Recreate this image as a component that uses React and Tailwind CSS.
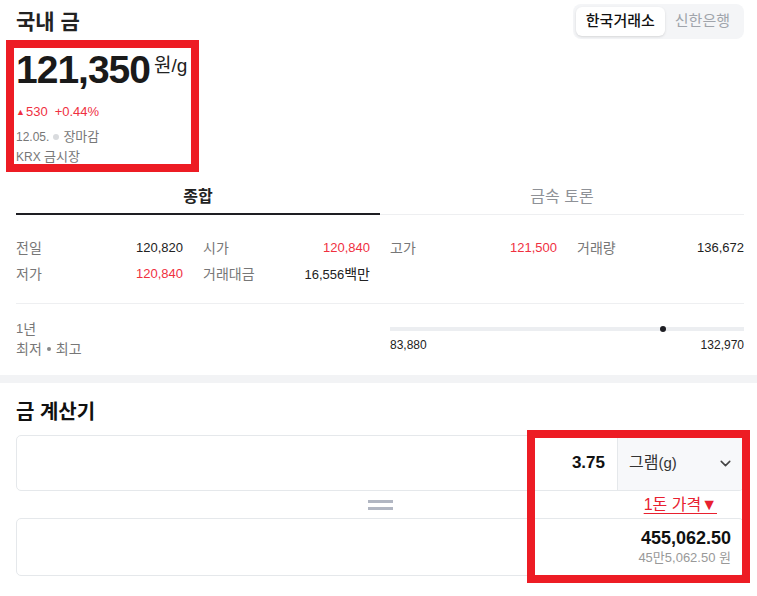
import { ChevronDown } from 'lucide-react';

const stats = [
  { label: '전일', value: '120,820' },
  { label: '시가', value: '120,840', up: true },
  { label: '고가', value: '121,500', up: true },
  { label: '거래량', value: '136,672' },
  { label: '저가', value: '120,840', up: true },
  { label: '거래대금', value: '16,556', unit: '백만' },
];

function StatCell({ label, value, unit, up }) {
  return (
    <div className="h-[26px] flex items-center justify-between leading-[20px] text-[13px]">
      <span className="text-[14px] text-[#777]">{label}</span>
      <span className={up ? 'text-[#f0303f]' : 'text-[#222]'}>
        {value}
        {unit && <span className="text-[14px]">{unit}</span>}
      </span>
    </div>
  );
}

export default function App() {
  return (
    <div className="relative w-[757px] h-[596px] overflow-hidden bg-white text-[#222] font-['Liberation_Sans','Noto_Sans_CJK_KR',sans-serif]">
      <div className="pl-4 pr-[13px]">
        {/* header */}
        <div className="h-[39px] flex items-center justify-between pt-[4px]">
          <h1 className="text-[21px] font-bold leading-[35px]">국내 금</h1>
          <div className="flex rounded-lg bg-[#f4f5f7] p-[3px]">
            <button className="h-[29px] px-[10px] rounded-md bg-white shadow-sm text-[15px] font-medium text-[#111]">
              한국거래소
            </button>
            <button className="h-[29px] pl-[10px] pr-[11px] text-[15px] text-[#a0a4ab]">신한은행</button>
          </div>
        </div>

        {/* price */}
        <div className="mt-[11px] h-[40px] flex items-start">
          <span className="text-[39px] font-bold leading-[40px] tracking-[-1px] text-[#1a1a1a]">121,350</span>
          <span className="ml-[4px] mt-[4px] text-[19px] leading-[24px] text-[#222]">원/g</span>
        </div>
        <div className="mt-[13px] h-[18px] flex items-center text-[13px] leading-[18px] text-[#f0303f]">
          <span className="text-[9px] mr-[1px]">▲</span>
          <span>530</span>
          <span className="ml-[7px]">+0.44%</span>
        </div>
        <div className="mt-[6px] h-[20px] flex items-center text-[12px] leading-[20px] text-[#777]">
          <span>12.05.</span>
          <span className="mx-[4px] inline-block w-[6px] h-[6px] rounded-full bg-[#d9dbde]" />
          <span className="text-[13px]">장마감</span>
        </div>
        <div className="h-[20px] flex items-center text-[12px] leading-[20px] text-[#777]">
          KRX&nbsp;<span className="text-[13px]">금시장</span>
        </div>

        {/* tabs */}
        <div className="mt-[13px] grid grid-cols-2">
          <div className="h-[35px] flex items-center justify-center border-b-2 border-[#1e1e23] text-[16px] font-bold text-[#222]">
            종합
          </div>
          <div className="h-[35px] flex items-center justify-center border-b border-[#eeeff1] text-[16px] text-[#8e9197]">
            금속 토론
          </div>
        </div>

        {/* stats */}
        <div className="mt-[20px] grid grid-cols-4 gap-x-5">
          {stats.map((s) => (
            <StatCell key={s.label} {...s} />
          ))}
        </div>

        {/* year range */}
        <div className="mt-[16px] border-t border-[#eeeff1] pt-[15px] pb-[16px] grid grid-cols-2 gap-x-5">
          <div className="text-[14px] leading-[20px] text-[#777]">
            <div className="h-[20px] flex items-center">
              <span className="text-[13px]">1</span>년
            </div>
            <div className="h-[20px] flex items-center">
              최저
              <span className="mx-[5px] inline-block w-[4px] h-[4px] rounded-full bg-[#888]" />
              최고
            </div>
          </div>
          <div className="pt-[8px]">
            <div className="relative h-[4px] bg-[#eceef1]">
              <span className="absolute left-[270px] top-[-1px] w-[6px] h-[6px] rounded-full bg-[#1e1e23]" />
            </div>
            <div className="mt-[6px] flex justify-between text-[12px] leading-[16px] text-[#222]">
              <span>83,880</span>
              <span>132,970</span>
            </div>
          </div>
        </div>
      </div>

      {/* band */}
      <div className="h-[8px] bg-[#f2f3f5]" />

      {/* calculator */}
      <div className="pl-4 pr-[13px]">
        <h2 className="mt-[16px] h-[26px] text-[20px] font-bold leading-[26px] text-[#111]">금 계산기</h2>
        <div className="mt-[10px] h-[56px] flex rounded-[5px] border border-[#e5e8eb] overflow-hidden">
          <div className="flex-1" />
          <div className="flex items-center pr-[12px] text-[17px] font-bold text-[#111]">3.75</div>
          <div className="w-[126px] flex items-center justify-between border-l border-[#e5e8eb] bg-[#f7f8fa] pl-[11px] pr-[9px]">
            <span className="text-[16px] text-[#333]">
              그램<span className="text-[15px]">(g)</span>
            </span>
            <ChevronDown className="w-[17px] h-[17px] text-[#444]" strokeWidth={2.2} />
          </div>
        </div>
        <div className="h-[27px] grid grid-cols-[1fr_auto_1fr] items-center">
          <div />
          <div className="flex flex-col gap-[4px]">
            <span className="block w-[25px] h-[3px] bg-[#b1b6c2]" />
            <span className="block w-[25px] h-[3px] bg-[#b1b6c2]" />
          </div>
          <div className="flex justify-end pr-[27px]">
            <span className="text-[16px] leading-[20px] text-[#e8202f] underline underline-offset-[3px] decoration-[#e8202f]">
              1돈 가격▼
            </span>
          </div>
        </div>
        <div className="h-[58px] flex flex-col items-end justify-center rounded-[5px] border border-[#e5e8eb] pr-[12px]">
          <span className="text-[18px] font-bold leading-[22px] text-[#111]">455,062.50</span>
          <span className="text-[13px] leading-[18px] text-[#999]">45만5,062.50 원</span>
        </div>
      </div>

      {/* annotation boxes */}
      <div className="absolute left-[6px] top-[40px] w-[193px] h-[132px] border-[8px] border-[#ed1c24]" />
      <div className="absolute left-[527px] top-[430px] w-[223px] h-[153px] border-[8px] border-[#ed1c24]" />
    </div>
  );
}
